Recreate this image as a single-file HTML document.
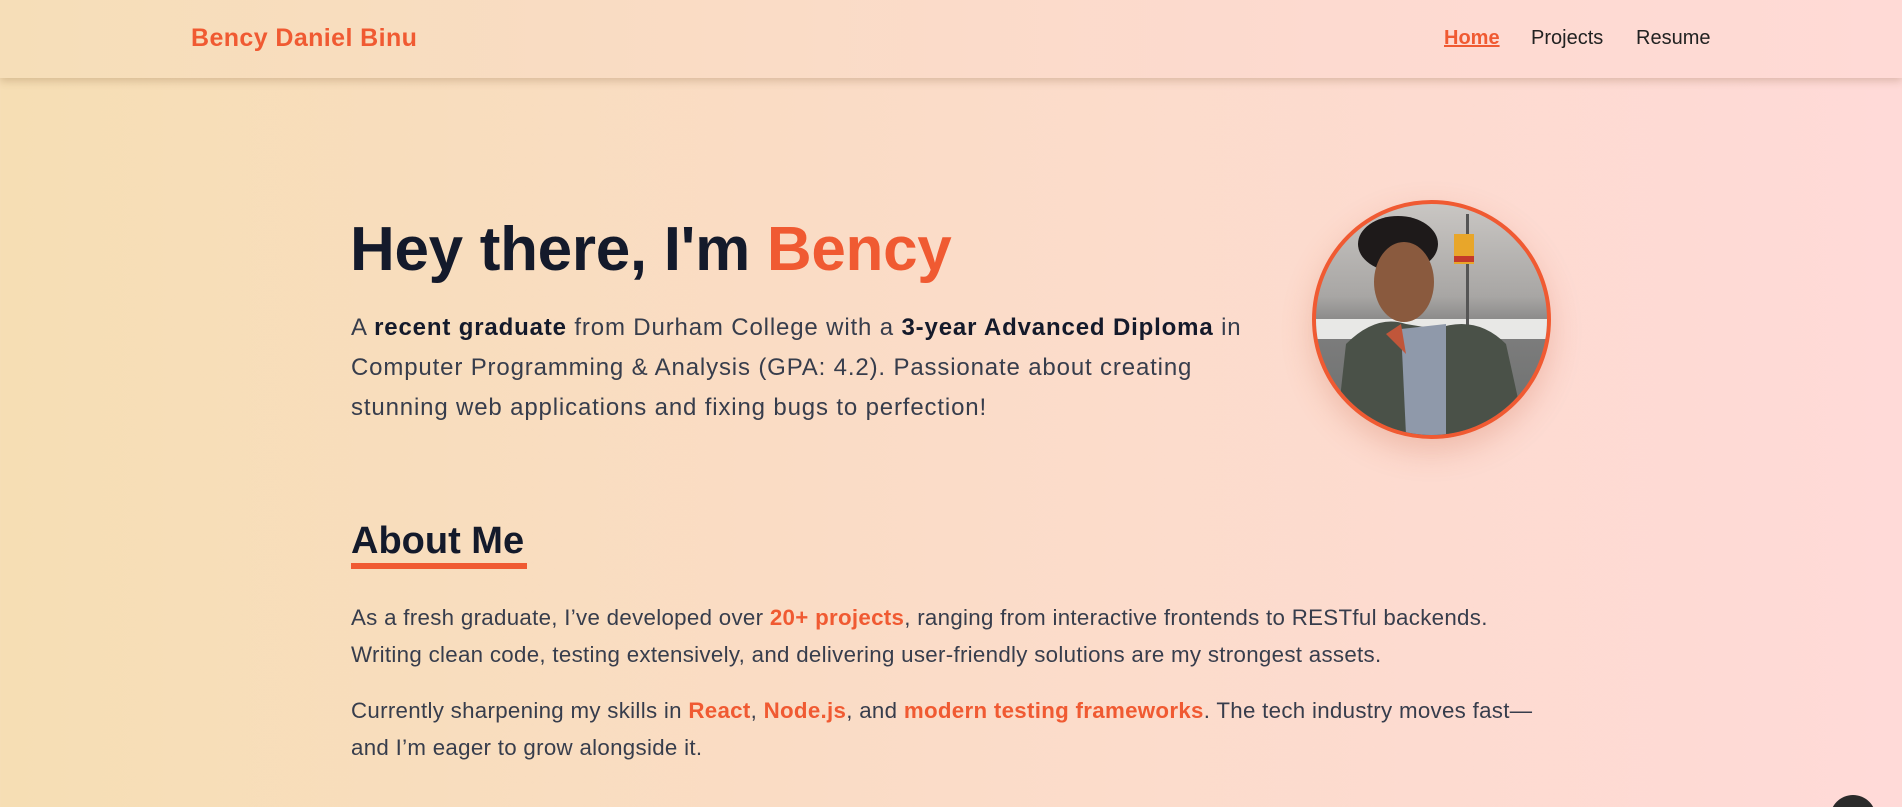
<!DOCTYPE html>
<html><head><meta charset="utf-8"><style>
*{margin:0;padding:0;box-sizing:border-box}
html,body{width:1902px;height:807px;overflow:hidden}
body{font-family:"Liberation Sans",sans-serif;background:linear-gradient(90deg,#f6deb4 0%,#fbdcc8 50%,#ffdad8 100%);position:relative;color:#1f2433}
nav{position:absolute;left:0;top:0;width:1902px;height:78px;background:linear-gradient(90deg,#f6deb8,#fddad0 70%,#ffdad6);box-shadow:0 3px 8px rgba(120,80,40,.25)}
.logo{position:absolute;left:191px;top:24px;font-size:25px;font-weight:bold;color:#f05a32;letter-spacing:.4px}
.links{position:absolute;top:27px;font-size:20px;color:#222}
.links span{position:absolute;white-space:nowrap}
h1{position:absolute;left:350px;top:214px;font-size:62px;font-weight:bold;color:#141a2b;letter-spacing:-.3px;white-space:nowrap}
h1 b{color:#f05a32}
.p{position:absolute;left:351px;font-size:24px;line-height:40px;color:#373d4c;width:1000px;letter-spacing:.85px;white-space:nowrap}
.p strong{color:#141a2b}
.o{color:#f05a32;font-weight:bold}
h2{position:absolute;left:351px;top:520px;font-size:38px;font-weight:bold;color:#141a2b}
.ul{position:absolute;left:351px;top:563px;width:176px;height:6px;background:#f05a32}
.q{position:absolute;left:351px;font-size:22.3px;line-height:37px;color:#373d4c;width:1300px;letter-spacing:.3px;white-space:nowrap}
.av{position:absolute;left:1312px;top:200px;width:239px;height:239px;border-radius:50%;border:4px solid #f05a32;overflow:hidden;box-shadow:0 12px 30px rgba(200,90,60,.25);background:linear-gradient(180deg,#c9c6c3 0%,#a8a6a4 40%,#7d7d7d 55%,#6b6e6d 100%)}
</style></head><body>
<nav>
<div class="logo">Bency Daniel Binu</div>
<div class="links">
<span style="left:1444px;color:#f05a32;font-weight:bold;text-decoration:underline">Home</span>
<span style="left:1531px">Projects</span>
<span style="left:1636px">Resume</span>
</div>
</nav>
<h1>Hey there, I'm <b>Bency</b></h1>
<div class="p" style="top:308px">A <strong>recent graduate</strong> from Durham College with a <strong>3-year Advanced Diploma</strong> in<br>Computer Programming &amp; Analysis (GPA: 4.2). Passionate about creating<br>stunning web applications and fixing bugs to perfection!</div>
<div class="av">
<svg width="231" height="231" viewBox="0 0 231 231">
<rect x="0" y="115" width="231" height="20" fill="#e8e8e6"/>
<rect x="150" y="10" width="3" height="120" fill="#555"/>
<rect x="138" y="30" width="20" height="30" fill="#e8a62a"/>
<rect x="138" y="52" width="20" height="6" fill="#c43a2a"/>
<ellipse cx="82" cy="40" rx="40" ry="28" fill="#1e1a1a"/>
<ellipse cx="88" cy="78" rx="30" ry="40" fill="#8a5a3e"/>
<path d="M20 231 L30 140 Q60 110 90 120 L120 125 Q160 110 190 140 L210 231 Z" fill="#4a5148"/>
<path d="M85 125 L130 120 L130 231 L90 231 Z" fill="#8f99aa"/>
<path d="M70 130 L85 120 L90 150 Z" fill="#c0563a"/>
</svg>
</div>
<h2>About Me</h2>
<div class="ul"></div>
<div class="q" style="top:599px">As a fresh graduate, I’ve developed over <span class="o">20+ projects</span>, ranging from interactive frontends to RESTful backends.<br>Writing clean code, testing extensively, and delivering user-friendly solutions are my strongest assets.</div>
<div class="q" style="top:692px">Currently sharpening my skills in <span class="o">React</span>, <span class="o">Node.js</span>, and <span class="o">modern testing frameworks</span>. The tech industry moves fast—<br>and I’m eager to grow alongside it.</div>
<div style="position:absolute;left:1830px;top:795px;width:46px;height:46px;border-radius:50%;background:#2a2a2a"></div>
</body></html>
